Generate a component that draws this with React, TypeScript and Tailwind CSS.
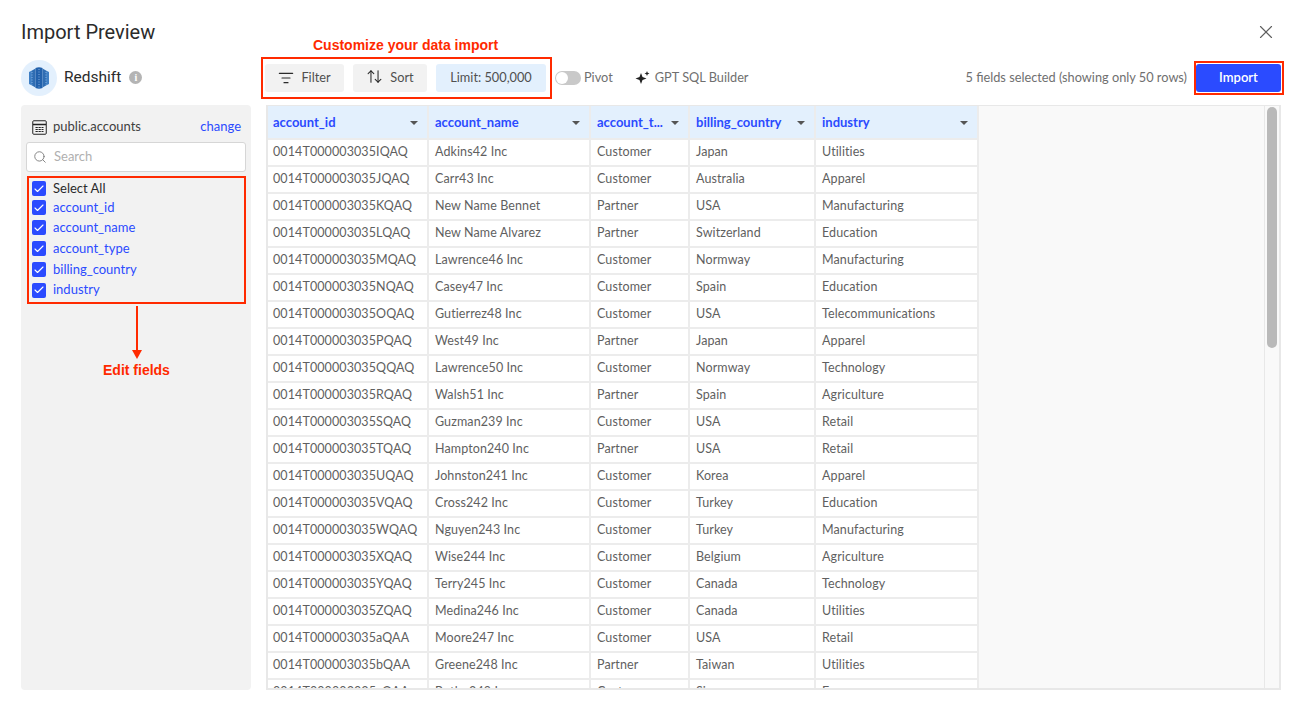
import { Check, Search, X, ArrowUpDown, ListFilter } from "lucide-react";

const rows = [
  ["0014T000003035IQAQ", "Adkins42 Inc", "Customer", "Japan", "Utilities"],
  ["0014T000003035JQAQ", "Carr43 Inc", "Customer", "Australia", "Apparel"],
  ["0014T000003035KQAQ", "New Name Bennet", "Partner", "USA", "Manufacturing"],
  ["0014T000003035LQAQ", "New Name Alvarez", "Partner", "Switzerland", "Education"],
  ["0014T000003035MQAQ", "Lawrence46 Inc", "Customer", "Normway", "Manufacturing"],
  ["0014T000003035NQAQ", "Casey47 Inc", "Customer", "Spain", "Education"],
  ["0014T000003035OQAQ", "Gutierrez48 Inc", "Customer", "USA", "Telecommunications"],
  ["0014T000003035PQAQ", "West49 Inc", "Partner", "Japan", "Apparel"],
  ["0014T000003035QQAQ", "Lawrence50 Inc", "Customer", "Normway", "Technology"],
  ["0014T000003035RQAQ", "Walsh51 Inc", "Partner", "Spain", "Agriculture"],
  ["0014T000003035SQAQ", "Guzman239 Inc", "Customer", "USA", "Retail"],
  ["0014T000003035TQAQ", "Hampton240 Inc", "Partner", "USA", "Retail"],
  ["0014T000003035UQAQ", "Johnston241 Inc", "Customer", "Korea", "Apparel"],
  ["0014T000003035VQAQ", "Cross242 Inc", "Customer", "Turkey", "Education"],
  ["0014T000003035WQAQ", "Nguyen243 Inc", "Customer", "Turkey", "Manufacturing"],
  ["0014T000003035XQAQ", "Wise244 Inc", "Customer", "Belgium", "Agriculture"],
  ["0014T000003035YQAQ", "Terry245 Inc", "Customer", "Canada", "Technology"],
  ["0014T000003035ZQAQ", "Medina246 Inc", "Customer", "Canada", "Utilities"],
  ["0014T000003035aQAA", "Moore247 Inc", "Customer", "USA", "Retail"],
  ["0014T000003035bQAA", "Greene248 Inc", "Partner", "Taiwan", "Utilities"],
  ["0014T000003035cQAA", "Butler249 Inc", "Customer", "Singapore", "Energy"],
];

const columns = ["account_id", "account_name", "account_t...", "billing_country", "industry"];
const fields = [
  { name: "account_id", cls: "h-[19px]" },
  { name: "account_name", cls: "h-[21px]" },
  { name: "account_type", cls: "h-[21px]" },
  { name: "billing_country", cls: "h-[21px]" },
  { name: "industry", cls: "h-[20px]" },
];

function Box() {
  return (
    <span className="flex h-[15px] w-[14px] shrink-0 items-center justify-center rounded-[2px] bg-[#2b4bff]">
      <Check className="h-3 w-3 text-white" strokeWidth={2.25} />
    </span>
  );
}

function RedshiftLogo() {
  return (
    <svg width="36" height="36" viewBox="0 0 36 36">
      <circle cx="18" cy="18" r="18" fill="#e3f0fd" />
      <path d="M8 12l3-1.500v15L8 24z" fill="#3f7fc4" />
      <path d="M11 10.500l3.500-2v19l-3.500-2z" fill="#2f6db3" />
      <path d="M14.500 8q3.500-1.500 7 0v20q-3.500 1.500-7 0z" fill="#2261ac" />
      <path d="M21.500 8.500l3.500 2v15l-3.500 2z" fill="#2f6db3" />
      <path d="M25 10.500l3 1.500v12l-3 1.500z" fill="#3f7fc4" />
      <path d="M11 12v13M18 9v19M25 12v13" stroke="#9cc3ec" strokeWidth="0.8" strokeDasharray="1 1.500" />
    </svg>
  );
}

export default function App() {
  return (
    <div className="relative h-[708px] w-[1301px] overflow-hidden bg-white font-['Lato',sans-serif] text-[13px] text-[#5f5f5f]">
      {/* Title */}
      <div className="flex h-[57px] items-start justify-between pl-[21px] pr-[24px] pt-[18px]">
        <h1 className="font-['Roboto',sans-serif] text-[20px] leading-[28px] text-[#2b2b2b]">Import Preview</h1>
        <X className="mt-[3px] h-[22px] w-[22px] text-[#5f5f5f]" strokeWidth={1.25} />
      </div>

      {/* Source + toolbar */}
      <div className="flex h-[41px] items-center pl-[21px] pr-[20px] text-[12.75px]">
        <div className="flex w-[244px] items-center">
          <RedshiftLogo />
          <span className="ml-[7px] font-['Roboto',sans-serif] text-[15.5px] text-[#2b2b2b]">Redshift</span>
          <span className="ml-[8px] flex h-[13px] w-[13px] items-center justify-center rounded-full bg-[#b4b4b4] font-['Liberation_Serif',serif] text-[10px] font-bold text-white">
            i
          </span>
        </div>
        <button className="flex h-[28px] w-[79px] items-center justify-center gap-[7px] rounded-[3px] bg-[#f2f2f2] text-[#4f4f4f]">
          <ListFilter className="h-[16px] w-[16px] text-[#2b2b2b]" strokeWidth={1.75} />
          Filter
        </button>
        <button className="ml-[9px] flex h-[28px] w-[74px] items-center justify-center gap-[7px] rounded-[3px] bg-[#f2f2f2] text-[#4f4f4f]">
          <ArrowUpDown className="-mt-[3px] h-[17px] w-[17px] text-[#2b2b2b]" strokeWidth={1.5} />
          Sort
        </button>
        <button className="ml-[9px] h-[28px] w-[110px] rounded-[3px] bg-[#e3f0fd] text-[#4f4f4f]">Limit: 500,000</button>
        <span className="ml-[9px] flex h-[14px] w-[26px] items-center rounded-full bg-[#c9c9c9] pl-[1px]">
          <span className="h-[12px] w-[12px] rounded-full bg-white" />
        </span>
        <span className="ml-[3px] text-[#6f6f6f]">Pivot</span>
        <svg className="ml-[22px]" width="15" height="15" viewBox="0 0 15 15" fill="#222">
          <path d="M6 3l1.500 4 4 1.500-4 1.500-1.500 4-1.500-4-4-1.500 4-1.500z" />
          <path d="M12 1l.7 1.800 1.800.7-1.800.7-.7 1.800-.7-1.800-1.800-.7 1.800-.7z" />
        </svg>
        <span className="ml-[5px] text-[#6f6f6f]">GPT SQL Builder</span>
        <span className="ml-auto mr-[9px] text-[#6f6f6f]">5 fields selected (showing only 50 rows)</span>
        <button className="h-[28px] w-[85px] rounded-[3px] bg-[#2b4bff] text-[13px] font-semibold text-white">Import</button>
      </div>

      <div className="mt-[7px] flex pl-[21px]">
        {/* Field list */}
        <aside className="h-[585px] w-[230px] rounded-[4px] bg-[#f2f2f2] px-[5px] pt-[13px]">
          <div className="flex h-[18px] items-center pl-[6px] pr-[5px]">
            <svg width="15" height="15" viewBox="0 0 15 15" fill="none" stroke="#222">
              <rect x="0.750" y="0.750" width="13.500" height="13.500" rx="1" />
              <path d="M1 4.500h13" strokeWidth="1.500" />
              <path d="M3.500 7.500h8M3.500 9.500h8M3.500 11.500h8" strokeDasharray="2.300 0.700" />
            </svg>
            <span className="ml-[6px] text-[#3f3f3f]">public.accounts</span>
            <span className="ml-auto text-[#2b4bff]">change</span>
          </div>
          <div className="mt-[6px] flex h-[30px] items-center rounded-[3px] border border-[#d6d6d6] bg-white pl-[6px] text-[#b0b0b0]">
            <Search className="h-[14px] w-[14px] text-[#777777]" strokeWidth={1.5} />
            <span className="ml-[7px]">Search</span>
          </div>
          <div className="mt-[5px] pl-[6px] pt-[2px]">
            <label className="flex h-[19px] items-center gap-[7px] text-[#2b2b2b]">
              <Box />
              Select All
            </label>
            {fields.map((f) => (
              <label key={f.name} className={`flex items-center gap-[7px] text-[#2b4bff] ${f.cls}`}>
                <Box />
                {f.name}
              </label>
            ))}
          </div>
        </aside>

        {/* Preview table */}
        <div className="ml-[15px] flex h-[585px] w-[1015px] overflow-hidden border-b-2 border-l-2 border-r-2 border-t border-[#e8e8e8] bg-[#f9f9f9]">
          <table className="-ml-[3px] h-fit w-[712px] shrink-0 table-fixed border-collapse bg-white">
            <colgroup>
              <col className="w-[162px]" />
              <col className="w-[162px]" />
              <col className="w-[99px]" />
              <col className="w-[126px]" />
              <col className="w-[163px]" />
            </colgroup>
            <thead>
              <tr className="h-[33px] bg-[#e3f0fd]">
                {columns.map((c) => (
                  <th key={c} className="border-2 border-t-0 border-[#ececec] px-[6px] pt-[1px] text-left font-bold text-[#2b4bff]">
                    <div className="flex items-center justify-between pr-[3px]">
                      {c}
                      <span className="h-0 w-0 border-x-[4px] border-t-[4px] border-x-transparent border-t-[#555555]" />
                    </div>
                  </th>
                ))}
              </tr>
            </thead>
            <tbody>
              {rows.map((r) => (
                <tr key={r[0]} className="h-[27px]">
                  {r.map((v, i) => (
                    <td key={i} className="whitespace-nowrap border-2 border-[#ececec] px-[6px] py-0 text-[12.5px] tracking-[0.1px] text-[#5f5f5f]">
                      {v}
                    </td>
                  ))}
                </tr>
              ))}
            </tbody>
          </table>
          <div className="flex-1" />
          <div className="w-[15px] shrink-0 border-l border-[#e8e8e8] pl-[2px] pt-[1px]">
            <div className="h-[241px] w-[10px] rounded-full bg-[#b9b9b9]" />
          </div>
        </div>
      </div>

      {/* Red annotations over the screenshot */}
      <div className="absolute left-[261px] top-[57px] h-[42px] w-[291px] border-2 border-[#ff2a00]" />
      <div className="absolute left-[27px] top-[176px] h-[128px] w-[219px] border-2 border-[#ff2a00]" />
      <div className="absolute left-[1194px] top-[61px] h-[34px] w-[90px] border-2 border-[#ff2a00]" />
      <span className="absolute left-[313px] top-[35px] font-['Liberation_Sans',sans-serif] text-[14px] font-bold text-[#ff2a00]">
        Customize your data import
      </span>
      <span className="absolute left-[103px] top-[360px] font-['Liberation_Sans',sans-serif] text-[14px] font-bold text-[#ff2a00]">
        Edit fields
      </span>
      <svg className="absolute left-[131px] top-[306px]" width="12" height="54" viewBox="0 0 12 54">
        <path d="M6 0v46" stroke="#ff2a00" strokeWidth="2" />
        <path d="M1 44h10l-5 9z" fill="#ff2a00" />
      </svg>
    </div>
  );
}
